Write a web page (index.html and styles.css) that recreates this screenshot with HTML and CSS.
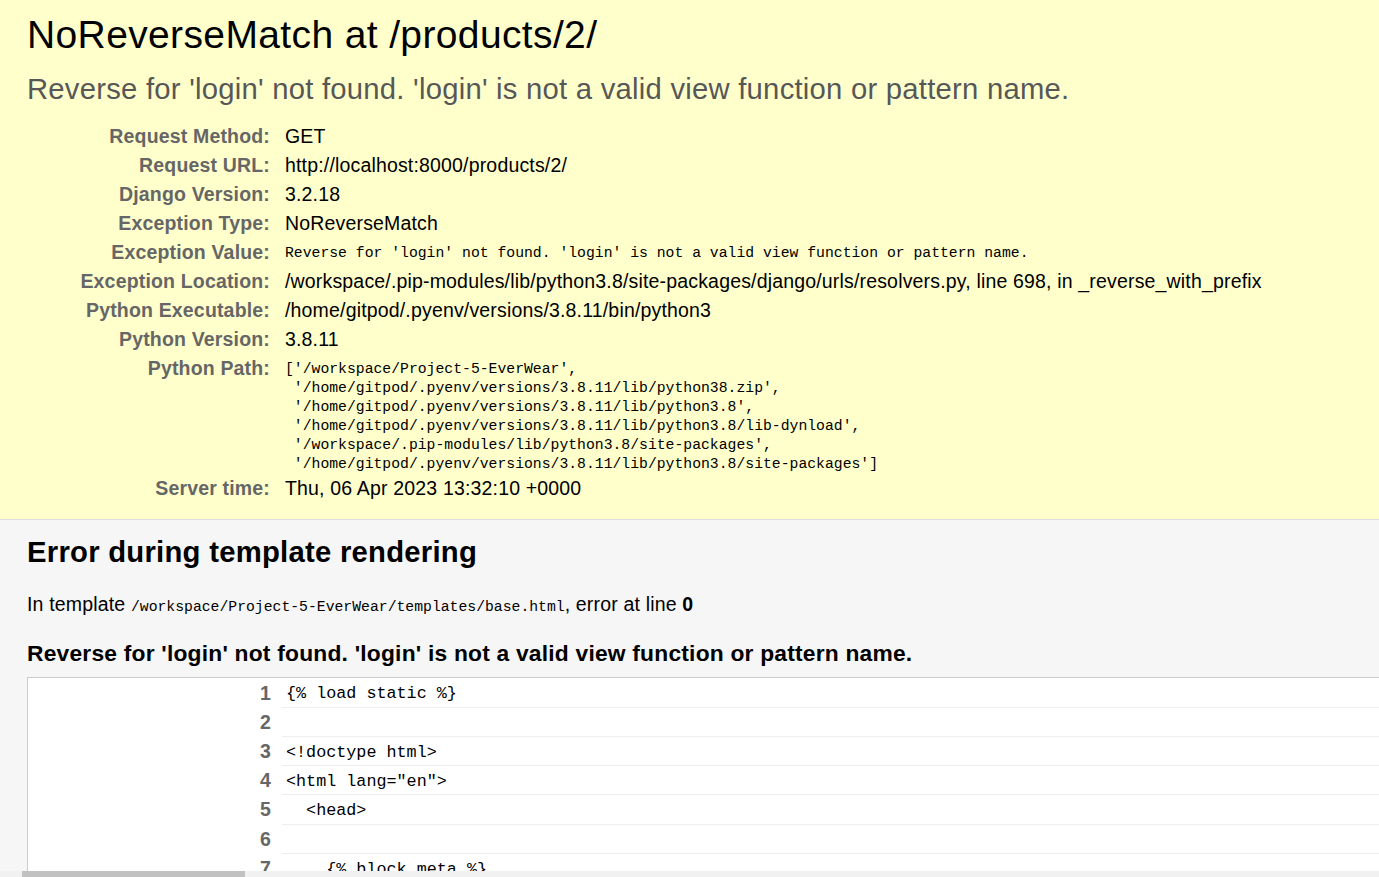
FILE: index.html
```html
<!DOCTYPE html>
<html lang="en">
<head>
<meta charset="utf-8">
<title>NoReverseMatch at /products/2/</title>
<link rel="stylesheet" href="styles.css">
</head>
<body>
<div class="summary">
  <h1 class="title">NoReverseMatch at /products/2/</h1>
  <pre class="exception-value">Reverse for 'login' not found. 'login' is not a valid view function or pattern name.</pre>
  <table class="meta">
    <tbody>
      <tr><th>Request Method:</th><td>GET</td></tr>
      <tr><th>Request URL:</th><td>http://localhost:8000/products/2/</td></tr>
      <tr><th>Django Version:</th><td>3.2.18</td></tr>
      <tr><th>Exception Type:</th><td>NoReverseMatch</td></tr>
      <tr><th>Exception Value:</th><td><pre class="mono">Reverse for 'login' not found. 'login' is not a valid view function or pattern name.</pre></td></tr>
      <tr><th>Exception Location:</th><td>/workspace/.pip-modules/lib/python3.8/site-packages/django/urls/resolvers.py, line 698, in _reverse_with_prefix</td></tr>
      <tr><th>Python Executable:</th><td>/home/gitpod/.pyenv/versions/3.8.11/bin/python3</td></tr>
      <tr><th>Python Version:</th><td>3.8.11</td></tr>
      <tr><th>Python Path:</th><td><pre class="mono">['/workspace/Project-5-EverWear',
 '/home/gitpod/.pyenv/versions/3.8.11/lib/python38.zip',
 '/home/gitpod/.pyenv/versions/3.8.11/lib/python3.8',
 '/home/gitpod/.pyenv/versions/3.8.11/lib/python3.8/lib-dynload',
 '/workspace/.pip-modules/lib/python3.8/site-packages',
 '/home/gitpod/.pyenv/versions/3.8.11/lib/python3.8/site-packages']</pre></td></tr>
      <tr><th>Server time:</th><td>Thu, 06 Apr 2023 13:32:10 +0000</td></tr>
    </tbody>
  </table>
</div>

<div class="template">
  <h2 class="section-title">Error during template rendering</h2>
  <p class="template-info">In template <code class="mono-inline">/workspace/Project-5-EverWear/templates/base.html</code>, error at line <strong>0</strong></p>
  <h3 class="template-error">Reverse for 'login' not found. 'login' is not a valid view function or pattern name.</h3>
  <table class="source">
    <tbody>
      <tr><th>1</th><td>{% load static %}</td></tr>
      <tr><th>2</th><td></td></tr>
      <tr><th>3</th><td>&lt;!doctype html&gt;</td></tr>
      <tr><th>4</th><td>&lt;html lang="en"&gt;</td></tr>
      <tr><th>5</th><td>  &lt;head&gt;</td></tr>
      <tr><th>6</th><td></td></tr>
      <tr><th>7</th><td>    {% block meta %}</td></tr>
      <tr><th>8</th><td>    &lt;meta http-equiv="X-UA-Compatible" content="ie=edge"&gt;</td></tr>
      <tr><th>9</th><td>    &lt;meta charset="utf-8"&gt;</td></tr>
      <tr><th>10</th><td>    &lt;meta name="viewport" content="width=device-width, initial-scale=1, shrink-to-fit=no"&gt;</td></tr>
    </tbody>
  </table>
</div>

<div class="hscroll"><div class="hscroll-thumb"></div></div>
</body>
</html>
```

FILE: styles.css
```css
html, body {
  margin: 0;
  padding: 0;
}
html {
  overflow: hidden;
}
body {
  font-family: "Liberation Sans", Arial, sans-serif;
  font-size: 19.5px;
  letter-spacing: 0.17px;
  color: #000;
  background: #fff;
}

/* ---------- summary ---------- */
.summary {
  background: #ffc;
  padding: 12.5px 30px 16px 27px;
  border-bottom: 1px solid #ddd;
}
.title {
  margin: 0;
  font-size: 39px;
  font-weight: normal;
  letter-spacing: 0.37px;
}
.exception-value {
  margin: 16px 0 16.5px;
  font-family: "Liberation Sans", Arial, sans-serif;
  font-size: 29.25px;
  letter-spacing: 0.24px;
  color: #575757;
  white-space: pre-wrap;
}
.meta {
  border-collapse: collapse;
  border: none;
}
.meta th {
  width: 238.5px;
  padding: 3px 10.5px 3px 4.5px;
  text-align: right;
  vertical-align: top;
  color: #666;
  font-weight: bold;
}
.meta td {
  padding: 3px 4.5px;
  vertical-align: top;
  white-space: nowrap;
}
.mono {
  margin: 0 0 -3px;
  padding-top: 3px;
  font-family: "Liberation Mono", "DejaVu Sans Mono", monospace;
  font-size: 14.75px;
  line-height: 19px;
  letter-spacing: 0;
  white-space: pre;
}

/* ---------- template ---------- */
.template {
  background: #f6f6f6;
  padding: 16px 0 0 27px;
}
.section-title {
  margin: 0 0 23.5px;
  font-size: 29.25px;
  font-weight: bold;
  letter-spacing: 0.26px;
}
.template-info {
  margin: 0;
}
.mono-inline {
  font-family: "Liberation Mono", "DejaVu Sans Mono", monospace;
  font-size: 14.75px;
  letter-spacing: 0;
}
.template-error {
  margin: 24px 0 10.5px;
  font-size: 22.8px;
  font-weight: bold;
  letter-spacing: 0.21px;
}
.source {
  border: 1px solid #ccc;
  border-collapse: collapse;
  background: #fff;
  width: 8200px;
}
.source th {
  width: 238.5px;
  padding: 3.5px 10.5px 2.5px 4.5px;
  text-align: right;
  vertical-align: top;
  color: #666;
  font-weight: bold;
}
.source td {
  padding: 5px 4.5px 1px;
  font-family: "Liberation Mono", "DejaVu Sans Mono", monospace;
  font-size: 16.75px;
  line-height: 22.4px;
  letter-spacing: 0;
  white-space: pre;
  border-bottom: 1px solid #eee;
  vertical-align: top;
}

/* ---------- mock horizontal scrollbar ---------- */
.hscroll {
  position: fixed;
  left: 0;
  right: 0;
  bottom: 0;
  height: 6px;
  background: #f1f1f1;
}
.hscroll-thumb {
  margin-left: 22px;
  width: 223px;
  height: 100%;
  background: #c1c1c1;
}
```
